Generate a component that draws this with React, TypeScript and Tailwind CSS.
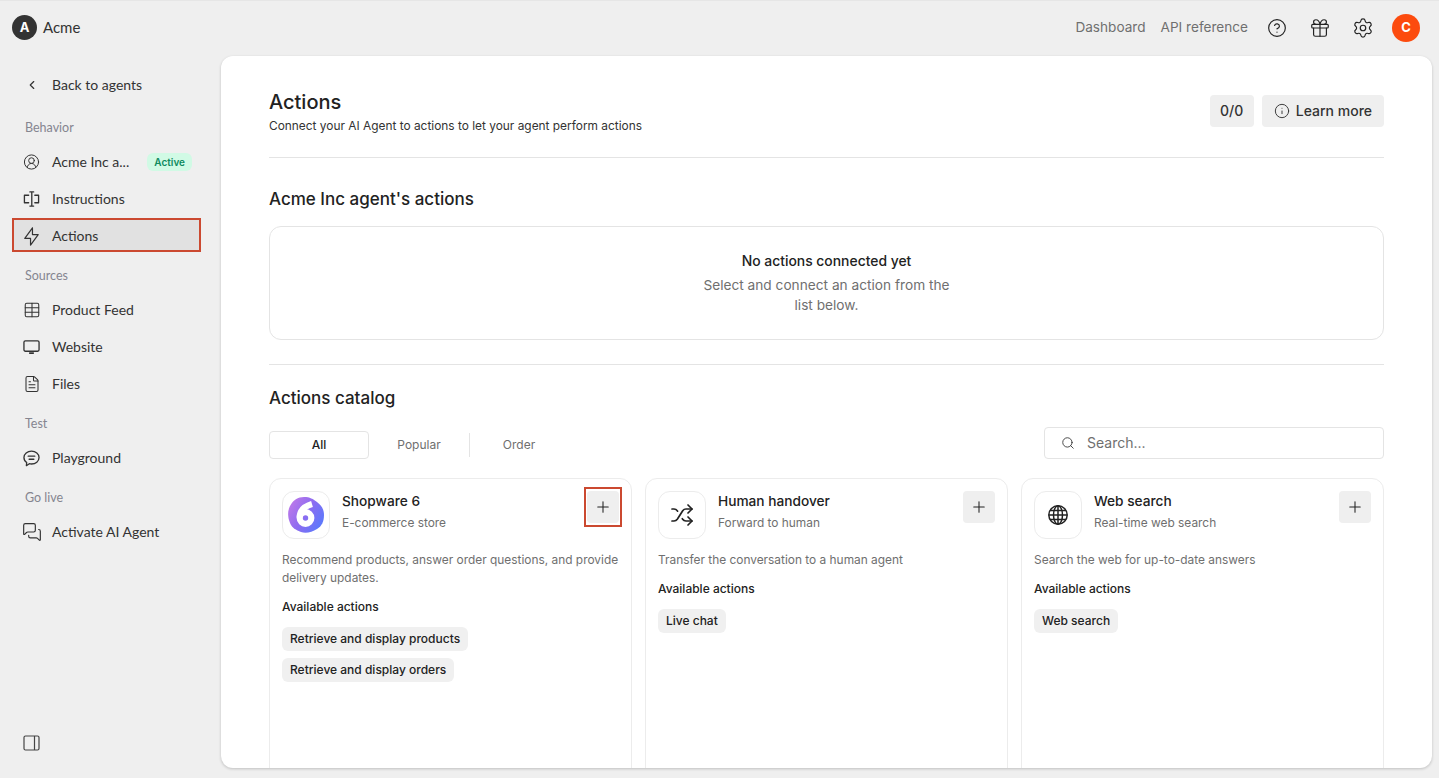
import {
  ChevronLeft,
  CircleHelp,
  CircleUserRound,
  FileText,
  Gift,
  Info,
  MessagesSquare,
  Plus,
  Search,
  Settings,
  Shuffle,
  Table,
} from "lucide-react";
import { TbBolt } from "react-icons/tb";
import type { ReactNode } from "react";

const ChatIcon = () => (
  <svg width="19" height="19" viewBox="0 0 18 18" fill="none" stroke="currentColor" strokeWidth="1.4" strokeLinecap="round" strokeLinejoin="round">
    <path d="M9 1.2c4.400 0 8 2.900 8 6.800s-3.600 6.800-8 6.800c-.8 0-1.600-.1-2.300-.3L3.600 16.600l.3-3.400C2 12 1 10.100 1 8c0-3.900 3.600-6.800 8-6.800Z" />
    <path d="M5.500 6.500h7M6.500 9.800h5" />
  </svg>
);

const InstructionsIcon = () => (
  <svg width="18" height="18" viewBox="0 0 18 18" fill="none" stroke="currentColor" strokeWidth="1.4" strokeLinecap="round" strokeLinejoin="round">
    <path d="M6 5H1.500v8H6M12.500 5h4v8h-4" />
    <path d="M9.300 2v14M7.300 1.500h4M7.300 16.500h4" />
  </svg>
);

const MonitorIcon = () => (
  <svg width="18" height="18" viewBox="0 0 18 18" fill="none" stroke="currentColor" strokeWidth="1.4" strokeLinejoin="round">
    <rect x="1" y="2.500" width="16" height="11" rx="1.500" />
    <path d="M6.500 15.500h5" strokeWidth="1.800" />
  </svg>
);

const PanelIcon = () => (
  <svg width="17" height="16" viewBox="0 0 17 16" fill="none" stroke="currentColor" strokeWidth="1.200">
    <rect x="1" y="1" width="15" height="14" rx="1.500" />
    <path d="M11.500 1v14" />
  </svg>
);

const GlobeIcon = () => (
  <svg width="22" height="22" viewBox="0 0 22 22" fill="none" stroke="currentColor" strokeWidth="1.500">
    <circle cx="11" cy="11" r="9.200" />
    <ellipse cx="11" cy="11" rx="4.500" ry="9.200" />
    <path d="M11 1.800v18.400M1.800 11h18.400M3.200 6.500h15.600M3.200 15.500h15.600" />
  </svg>
);

const ShopwareLogo = () => (
  <svg width="38" height="38" viewBox="0 0 38 38">
    <defs>
      <linearGradient id="sw" x1="0" y1="0" x2="1" y2="0.6">
        <stop offset="0" stopColor="#c77ce8" />
        <stop offset="0.55" stopColor="#8f6cf0" />
        <stop offset="1" stopColor="#5f78fb" />
      </linearGradient>
    </defs>
    <path d="M17 1c6 0 9 2 13 5s7 7 7 13-2 11-7 14-11 5-16 3-9-4-11-9-3-11 0-17S11 1 17 1Z" fill="url(#sw)" />
    <circle cx="18.500" cy="22" r="5.800" fill="none" stroke="#fff" strokeWidth="6.200" />
    <path d="M12.700 21.500c0-6 4-11 12.300-13.500" fill="none" stroke="#fff" strokeWidth="6.200" />
  </svg>
);

const NavItem = ({ icon, label, active, badge }: { icon: ReactNode; label: string; active?: boolean; badge?: boolean }) => (
  <div
    className={`flex h-[34px] items-center pr-2 text-[#333333] ${
      active ? "-mt-px mb-px border-2 border-[#cb4930] bg-[#e1e1e1] pl-[9px] pt-[2px]" : "pl-[11px]"
    }`}
  >
    <span className="flex w-[17px] shrink-0 justify-center">{icon}</span>
    <span className="ml-3 text-sm leading-5">{label}</span>
    {badge && (
      <span className="ml-auto mr-px rounded-md bg-[#d1fae5] px-[7px] py-[1px] font-['Inter',sans-serif] text-[10px] font-semibold leading-4 text-[#0f8a5f]">
        Active
      </span>
    )}
  </div>
);

const SectionLabel = ({ children }: { children: ReactNode }) => (
  <div className="mb-[9px] mt-[15px] pl-[13px] text-[12.5px] leading-4 text-[#85858f]">{children}</div>
);

const Sidebar = () => (
  <aside className="flex w-[221px] shrink-0 flex-col pb-[17px] pl-3 pr-5 pt-3 font-['Lato',sans-serif]">
    <div className="mb-[3px] flex h-[34px] items-center pl-[11px] text-[#333333]">
      <span className="flex w-[17px] justify-center">
        <ChevronLeft size={14} strokeWidth={2} />
      </span>
      <span className="ml-3 text-sm leading-5">Back to agents</span>
    </div>
    <SectionLabel>Behavior</SectionLabel>
    <div className="flex flex-col gap-[3px]">
      <NavItem icon={<CircleUserRound size={18} strokeWidth={1.4} />} label="Acme Inc a..." badge />
      <NavItem icon={<InstructionsIcon />} label="Instructions" />
      <NavItem icon={<TbBolt size={23} strokeWidth={1.25} className="max-w-none shrink-0" />} label="Actions" active />
    </div>
    <SectionLabel>Sources</SectionLabel>
    <div className="flex flex-col gap-[3px]">
      <NavItem icon={<Table size={18} strokeWidth={1.4} className="max-w-none shrink-0" />} label="Product Feed" />
      <NavItem icon={<MonitorIcon />} label="Website" />
      <NavItem icon={<FileText size={18} strokeWidth={1.4} className="max-w-none shrink-0" />} label="Files" />
    </div>
    <SectionLabel>Test</SectionLabel>
    <NavItem icon={<ChatIcon />} label="Playground" />
    <SectionLabel>Go live</SectionLabel>
    <NavItem icon={<MessagesSquare size={20} strokeWidth={1.4} className="max-w-none shrink-0" />} label="Activate AI Agent" />
    <div className="mt-auto pl-[11px] text-[#444444]">
      <PanelIcon />
    </div>
  </aside>
);

const ActionCard = ({
  icon,
  title,
  subtitle,
  description,
  chips,
  outlined,
}: {
  icon: ReactNode;
  title: string;
  subtitle: string;
  description: string;
  chips: string[];
  outlined?: boolean;
}) => (
  <div className="h-[320px] rounded-xl border border-[#ececec] p-3">
    <div className="flex items-start">
      <div className="flex h-12 w-12 shrink-0 items-center justify-center rounded-xl border border-[#ececec] text-[#222222]">
        {icon}
      </div>
      <div className="ml-3 flex-1">
        <div className="text-[13.7px] font-medium leading-5 text-[#222222]">{title}</div>
        <div className="mt-[2px] text-[11.9px] leading-5 text-[#6f6f6f]">{subtitle}</div>
      </div>
      <div className="relative">
        <button className="flex h-8 w-8 items-center justify-center rounded bg-[#efefef] text-[#222222]">
          <Plus size={18} strokeWidth={1.4} />
        </button>
        {outlined && <div className="absolute -bottom-1 -left-[3px] -right-[3px] -top-1 border-2 border-[#cb4930]" />}
      </div>
    </div>
    <p className="-mr-1 mt-3 text-[11.9px] leading-[18px] text-[#6f6f6f]">{description}</p>
    <div className="mt-[11px] text-xs font-medium leading-[18px] text-[#222222]">Available actions</div>
    <div className="mt-[11px] flex flex-col items-start gap-[7px]">
      {chips.map((chip) => (
        <span key={chip} className="rounded-md bg-[#f0f0f0] px-2 text-xs font-medium leading-6 text-[#222222]">
          {chip}
        </span>
      ))}
    </div>
  </div>
);

export default function App() {
  return (
    <div className="flex h-screen flex-col overflow-hidden border-t border-[#e6e6e6] bg-[#efefef] font-['Inter',sans-serif]">
      <header className="flex h-[55px] shrink-0 items-center pb-[2px] pl-3 pr-[19px]">
        <div className="flex h-[25px] w-[25px] items-center justify-center rounded-full bg-[#333333] text-[13px] font-bold text-white">
          A
        </div>
        <span className="ml-[6px] font-['Lato',sans-serif] text-[15px] text-[#333333]">Acme</span>
        <div className="ml-auto flex items-center text-[13.6px] text-[#6f6f6f]">
          <span>Dashboard</span>
          <span className="ml-[15px]">API reference</span>
          <div className="ml-[18px] flex items-center gap-[21px] text-[#222222]">
            <span className="flex w-[22px] justify-center">
              <CircleHelp size={20} strokeWidth={1.4} />
            </span>
            <Gift size={22} strokeWidth={1.3} />
            <Settings size={22} strokeWidth={1.3} />
          </div>
          <div className="ml-[18px] flex h-[28px] w-[28px] items-center justify-center rounded-full bg-[#fc4b0e] text-[13px] font-bold text-white">
            C
          </div>
        </div>
      </header>
      <div className="flex min-h-0 flex-1 pb-[10px] pr-[7px]">
        <Sidebar />
        <main className="flex-1 overflow-hidden rounded-xl bg-white px-12 pt-[34px] shadow-[0_1px_3px_rgba(0,0,0,0.2)]">
          <div className="flex items-start justify-between border-b border-[#e4e4e4] pb-[21px]">
            <div>
              <h1 className="text-xl font-medium leading-6 text-[#222222]">Actions</h1>
              <p className="mt-[2px] text-[11.9px] leading-5 text-[#333333]">Connect your AI Agent to actions to let your agent perform actions</p>
            </div>
            <div className="mt-[5px] flex gap-2">
              <div className="flex h-8 items-center rounded bg-[#efefef] px-[10.5px] text-sm font-medium text-[#333333]">0/0</div>
              <div className="flex h-8 items-center rounded bg-[#efefef] px-3 text-sm font-medium text-[#333333]">
                <Info size={16} strokeWidth={1.4} />
                <span className="ml-[6px]">Learn more</span>
              </div>
            </div>
          </div>
          <h2 className="mt-[29px] text-[17px] font-medium leading-6 text-[#222222]">Acme Inc agent's actions</h2>
          <div className="mt-[15px] flex h-[114px] flex-col items-center justify-center rounded-xl border border-[#e4e4e4] text-center">
            <div className="text-[13.9px] font-medium leading-5 text-[#222222]">No actions connected yet</div>
            <div className="mt-[4px] w-[260px] text-[13.7px] leading-5 text-[#6f6f6f]">Select and connect an action from the list below.</div>
          </div>
          <div className="mt-[24px] border-t border-[#e4e4e4]" />
          <h2 className="mt-[21px] text-[17px] font-medium leading-6 text-[#222222]">Actions catalog</h2>
          <div className="mt-[17px] flex items-start justify-between">
            <div className="mt-[4px] flex items-center text-xs text-[#6f6f6f]">
              <div className="flex h-7 w-[100px] items-center justify-center rounded border border-[#e4e4e4] font-medium text-[#222222]">All</div>
              <div className="flex h-7 w-[100px] items-center justify-center">Popular</div>
              <div className="h-6 w-px bg-[#e4e4e4]" />
              <div className="flex h-7 w-[98px] items-center justify-center">Order</div>
            </div>
            <div className="flex h-8 w-[340px] items-center rounded border border-[#e4e4e4] pl-4 text-sm text-[#6f6f6f]">
              <Search size={14} strokeWidth={1.5} className="text-[#333333]" />
              <span className="ml-[12px]">Search...</span>
            </div>
          </div>
          <div className="mt-[19px] grid grid-cols-3 gap-[13px]">
            <ActionCard
              icon={<ShopwareLogo />}
              title="Shopware 6"
              subtitle="E-commerce store"
              description="Recommend products, answer order questions, and provide delivery updates."
              chips={["Retrieve and display products", "Retrieve and display orders"]}
              outlined
            />
            <ActionCard
              icon={<Shuffle size={24} strokeWidth={1.7} />}
              title="Human handover"
              subtitle="Forward to human"
              description="Transfer the conversation to a human agent"
              chips={["Live chat"]}
            />
            <ActionCard
              icon={<GlobeIcon />}
              title="Web search"
              subtitle="Real-time web search"
              description="Search the web for up-to-date answers"
              chips={["Web search"]}
            />
          </div>
        </main>
      </div>
    </div>
  );
}
